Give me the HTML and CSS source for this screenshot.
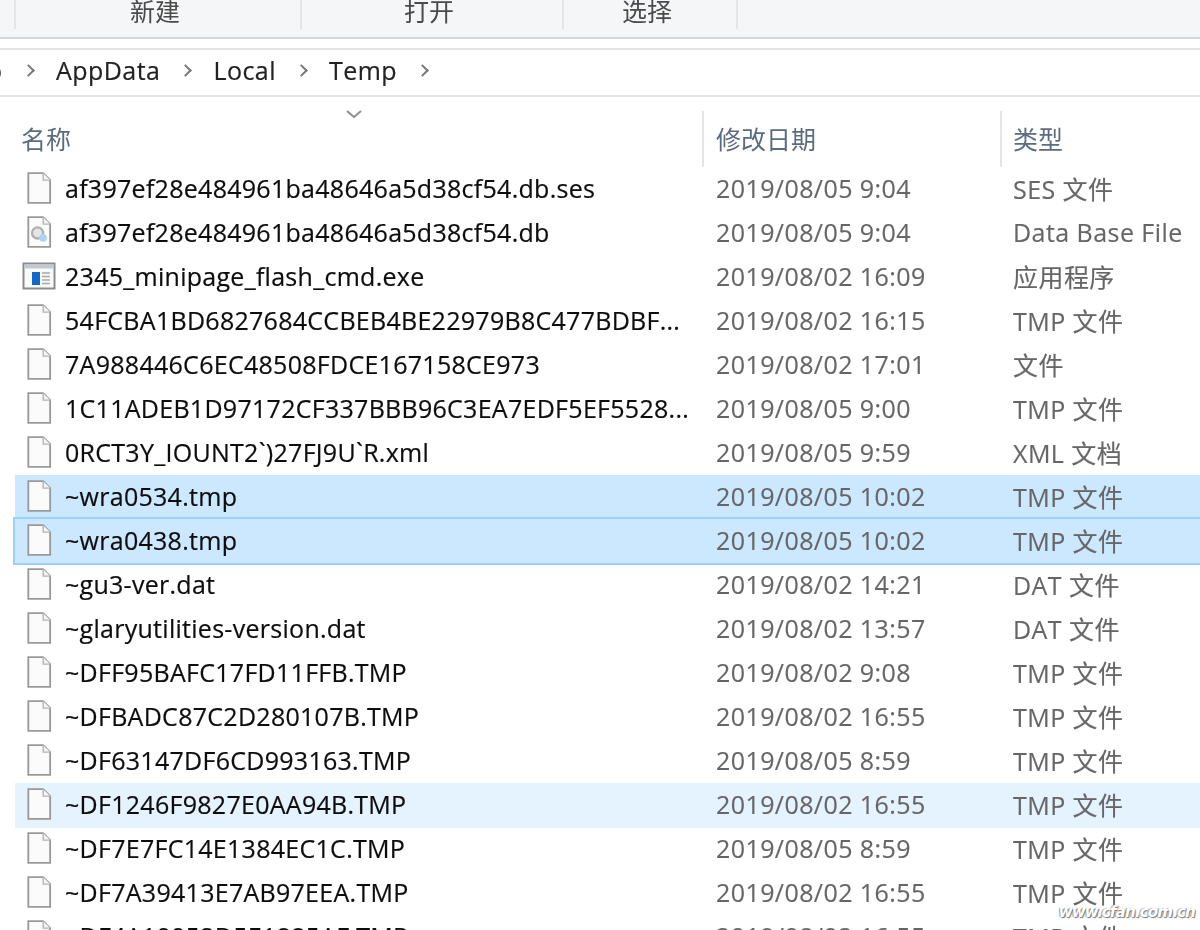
FILE: index.html
```html
<!DOCTYPE html>
<html lang="zh">
<head>
<meta charset="utf-8">
<title>Temp</title>
<link rel="stylesheet" href="styles.css">
</head>
<body>
<svg class="sprite" width="0" height="0" aria-hidden="true">
  <symbol id="file" viewBox="0 0 28 36">
    <path d="M2.500 2h16l7.500 7.500v24.500h-23.500z" fill="#fbfbfb" stroke="#9a9a9a" stroke-width="2"/>
    <path d="M18.500 2v7.500h7.500" fill="#f4f4f4" stroke="#b4b4b4" stroke-width="1.500"/>
  </symbol>
  <symbol id="db" viewBox="0 0 28 36">
    <path d="M2.500 2h16l7.500 7.500v24.500h-23.500z" fill="#fbfbfb" stroke="#9a9a9a" stroke-width="2"/>
    <path d="M18.500 2v7.500h7.500" fill="#f4f4f4" stroke="#b4b4b4" stroke-width="1.500"/>
    <circle cx="12.500" cy="19" r="6" fill="#e4e4e4" stroke="#b0b0b0" stroke-width="2.500"/>
    <circle cx="18.500" cy="24.500" r="4" fill="#a9d5f2"/>
  </symbol>
  <symbol id="exe" viewBox="0 0 34 28">
    <rect x="1.500" y="1.500" width="31" height="25" fill="#fafafa" stroke="#8c8c8c" stroke-width="2"/>
    <rect x="2.500" y="2.500" width="29" height="4" fill="#c3c9ce"/>
    <rect x="10" y="10" width="8" height="13" fill="#1268c8"/>
    <path d="M20 11h8M20 14.500h8M20 18h8M20 21.500h8" stroke="#a6a6a6" stroke-width="1.500"/>
  </symbol>
</svg>
<div class="window">
  <div class="toolbar">
    <div class="group g-new"><span>新建</span></div>
    <div class="group g-open"><span>打开</span></div>
    <div class="group g-select"><span>选择</span></div>
  </div>
  <nav class="crumbs">
    <span class="cut">o</span><i class="chev"></i>
    <span>AppData</span><i class="chev"></i>
    <span>Local</span><i class="chev"></i>
    <span>Temp</span><i class="chev"></i>
  </nav>
  <div class="head">
    <svg class="sort" viewBox="0 0 16 8"><path d="M1 1l7 6 7-6" fill="none" stroke="#8f8f8f" stroke-width="2"/></svg>
    <div class="hcell name">名称</div>
    <div class="hcell date">修改日期</div>
    <div class="hcell type">类型</div>
  </div>
  <div class="row"><svg class="ic"><use href="#file"/></svg><div class="name">af397ef28e484961ba48646a5d38cf54.db.ses</div><div class="date">2019/08/05 9:04</div><div class="type">SES 文件</div></div>
  <div class="row"><svg class="ic"><use href="#db"/></svg><div class="name">af397ef28e484961ba48646a5d38cf54.db</div><div class="date">2019/08/05 9:04</div><div class="type">Data Base File</div></div>
  <div class="row"><svg class="ic exe"><use href="#exe"/></svg><div class="name">2345_minipage_flash_cmd.exe</div><div class="date">2019/08/02 16:09</div><div class="type">应用程序</div></div>
  <div class="row"><svg class="ic"><use href="#file"/></svg><div class="name">54FCBA1BD6827684CCBEB4BE22979B8C477BDBF...</div><div class="date">2019/08/02 16:15</div><div class="type">TMP 文件</div></div>
  <div class="row"><svg class="ic"><use href="#file"/></svg><div class="name">7A988446C6EC48508FDCE167158CE973</div><div class="date">2019/08/02 17:01</div><div class="type">文件</div></div>
  <div class="row"><svg class="ic"><use href="#file"/></svg><div class="name">1C11ADEB1D97172CF337BBB96C3EA7EDF5EF5528...</div><div class="date">2019/08/05 9:00</div><div class="type">TMP 文件</div></div>
  <div class="row"><svg class="ic"><use href="#file"/></svg><div class="name">0RCT3Y_IOUNT2`)27FJ9U`R.xml</div><div class="date">2019/08/05 9:59</div><div class="type">XML 文档</div></div>
  <div class="row sel"><svg class="ic"><use href="#file"/></svg><div class="name">~wra0534.tmp</div><div class="date">2019/08/05 10:02</div><div class="type">TMP 文件</div></div>
  <div class="row sel focus"><svg class="ic"><use href="#file"/></svg><div class="name">~wra0438.tmp</div><div class="date">2019/08/05 10:02</div><div class="type">TMP 文件</div></div>
  <div class="row"><svg class="ic"><use href="#file"/></svg><div class="name">~gu3-ver.dat</div><div class="date">2019/08/02 14:21</div><div class="type">DAT 文件</div></div>
  <div class="row"><svg class="ic"><use href="#file"/></svg><div class="name">~glaryutilities-version.dat</div><div class="date">2019/08/02 13:57</div><div class="type">DAT 文件</div></div>
  <div class="row"><svg class="ic"><use href="#file"/></svg><div class="name">~DFF95BAFC17FD11FFB.TMP</div><div class="date">2019/08/02 9:08</div><div class="type">TMP 文件</div></div>
  <div class="row"><svg class="ic"><use href="#file"/></svg><div class="name">~DFBADC87C2D280107B.TMP</div><div class="date">2019/08/02 16:55</div><div class="type">TMP 文件</div></div>
  <div class="row"><svg class="ic"><use href="#file"/></svg><div class="name">~DF63147DF6CD993163.TMP</div><div class="date">2019/08/05 8:59</div><div class="type">TMP 文件</div></div>
  <div class="row hover"><svg class="ic"><use href="#file"/></svg><div class="name">~DF1246F9827E0AA94B.TMP</div><div class="date">2019/08/02 16:55</div><div class="type">TMP 文件</div></div>
  <div class="row"><svg class="ic"><use href="#file"/></svg><div class="name">~DF7E7FC14E1384EC1C.TMP</div><div class="date">2019/08/05 8:59</div><div class="type">TMP 文件</div></div>
  <div class="row"><svg class="ic"><use href="#file"/></svg><div class="name">~DF7A39413E7AB97EEA.TMP</div><div class="date">2019/08/02 16:55</div><div class="type">TMP 文件</div></div>
  <div class="row"><svg class="ic"><use href="#file"/></svg><div class="name">~DF4A10052D5E1885AF.TMP</div><div class="date">2019/08/02 16:55</div><div class="type">TMP 文件</div></div>
</div>
<div class="mark">www.cfan.com.cn</div>
</body>
</html>
```
FILE: styles.css
```css
* { box-sizing: border-box; }
html, body { margin: 0; height: 930px; overflow: hidden; background: #fff; }
body { position: relative; font-family: "Open Sans", "Noto Sans CJK SC", sans-serif; font-size: 25px; color: #1a1a1a; }
.sprite { position: absolute; }
.window { filter: blur(0.6px); height: 930px; overflow: hidden; }
.toolbar { display: flex; height: 39px; background: #f5f6f7; border-bottom: 2px solid #d6d6d6; }
.group { border-left: 2px solid #e4e5e6; height: 29px; display: flex; align-items: center; justify-content: center; color: #4a4a4a; font-family: "Noto Sans CJK SC", sans-serif; }
.group span { margin-top: -9px; }
.g-new { margin-left: 14px; width: 286px; padding-right: 6px; }
.g-open { width: 262px; padding-right: 6px; }
.g-select { width: 176px; padding-right: 6px; border-right: 2px solid #e4e5e6; }
.crumbs { margin-top: 9px; height: 49px; border-top: 2px solid #e3e3e3; border-bottom: 2px solid #e3e3e3; display: flex; align-items: center; color: #222; overflow: hidden; padding-bottom: 5px; letter-spacing: 0.45px; -webkit-text-stroke: 0.2px #222; }
.cut { margin-left: -13px; width: 16px; overflow: hidden; }
.chev { width: 9px; height: 9px; border-top: 2px solid #777; border-right: 2px solid #777; transform: rotate(45deg); margin: 0 25px 0 21px; flex: none; }
.chev + span { margin-left: -2px; }
.head { display: flex; height: 70px; position: relative; }
.hcell { color: #5b6b80; font-family: "Noto Sans CJK SC", sans-serif; display: flex; align-items: center; height: 56px; margin-top: 14px; padding-bottom: 3px; }
.head .name { width: 702px; padding-left: 21px; }
.head .date { width: 298px; padding-left: 12px; border-left: 2px solid #e5e5e5; }
.head .type { padding-left: 11px; border-left: 2px solid #e5e5e5; flex: 1; }
.sort { position: absolute; left: 346px; top: 13px; width: 16px; height: 8px; }
.row { display: flex; align-items: center; height: 44px; margin-left: 15px; padding-bottom: 2px; }
.row .ic { width: 26px; height: 34px; margin-left: 11px; margin-right: 13px; flex: none; }
.row .ic.exe { width: 34px; height: 28px; margin-left: 7px; margin-right: 9px; }
.row .name { width: 650px; white-space: nowrap; letter-spacing: 0.28px; color: #0d0d0d; -webkit-text-stroke: 0.2px #0d0d0d; flex: none; }
.row .date { width: 298px; padding-left: 1px; color: #666; letter-spacing: 0.42px; flex: none; -webkit-text-stroke: 0.15px #666; }
.row .type { color: #666; white-space: nowrap; letter-spacing: 0.45px; -webkit-text-stroke: 0.15px #666; }
.sel { background: #cce8ff; }
.focus { outline: 2px solid #99d1ff; outline-offset: 0; margin-right: -4px; }
.hover { background: #e5f3ff; box-shadow: 0 1px 0 #e5f3ff; }
.mark { position: absolute; right: 5px; top: 903px; font-family: "DejaVu Sans", sans-serif; font-style: italic; font-weight: 700; font-size: 15px; letter-spacing: -0.8px; color: #fff; text-shadow: 1px 1px 1px #777, -1px 0 1px #999; }
```
